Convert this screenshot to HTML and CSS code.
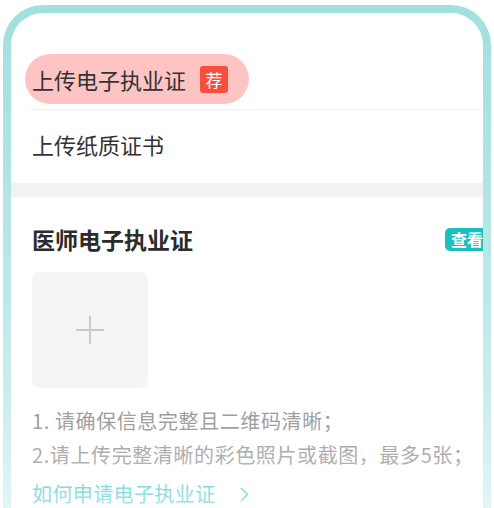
FILE: index.html
```html
<!DOCTYPE html>
<html lang="zh-CN">
<head>
    <meta charset="UTF-8">
    <meta name="viewport" content="width=device-width, initial-scale=1.0">
    <title>上传执业证</title>
    <link rel="stylesheet" href="styles.css">
</head>
<body>
    <div class="phone">
        <div class="screen">
            <!-- upload options -->
            <div class="options">
                <div class="option option-first">
                    <span class="pill">上传电子执业证<span class="tag-hot">荐</span></span>
                </div>
                <div class="divider"></div>
                <div class="option option-second">上传纸质证书</div>
            </div>

            <div class="band"></div>

            <!-- certificate card -->
            <div class="card">
                <div class="card-head">
                    <h2>医师电子执业证</h2>
                    <span class="tag-view">查看</span>
                </div>
                <div class="upload-box">
                    <svg width="30" height="30" viewBox="0 0 30 30">
                        <path d="M15 1v28M1 15h28" stroke="#c9c9c9" stroke-width="2" fill="none"/>
                    </svg>
                </div>
                <p class="tip">1. 请确保信息完整且二维码清晰；</p>
                <p class="tip">2.请上传完整清晰的彩色照片或截图，最多5张；</p>
                <a class="help" href="#">如何申请电子执业证
                    <svg class="chev" width="9" height="15" viewBox="0 0 9 15">
                        <path d="M1 1l6.5 6.5L1 14" stroke="currentColor" stroke-width="1.6" fill="none"/>
                    </svg>
                </a>
            </div>
            <div class="fade"></div>
        </div>
    </div>
</body>
</html>
```

FILE: styles.css
```css
body { margin: 0; background: #fff; font-family: "Noto Sans CJK SC", "Noto Sans", sans-serif; }
.phone { margin: 5px 0 0 3px; width: 472px; height: 495px; padding: 8px 8px 0 8px; border-radius: 40px 40px 0 0; background: linear-gradient(to bottom, #a2dfdf 0%, #b3e5e5 40%, #cdeeee 80%, #e2f5f5 100%); }
.screen { position: relative; width: 472px; height: 495px; background: #fff; border-radius: 32px 32px 0 0; overflow: hidden; }

.options { height: 170px; }
.option { padding-left: 21px; color: #333; font-size: 22px; }
.option-first { padding-top: 41px; height: 50px; }
.pill { display: inline-flex; align-items: center; height: 50px; margin-left: -7px; padding: 0 21px 0 7px; border-radius: 25px; background: #fec4c4; line-height: 30px; }
.tag-hot { display: inline-block; width: 28px; height: 27px; margin-left: 14px; border-radius: 3px; background: #f5503e; color: #fff; font-size: 17px; line-height: 27px; text-align: center; }
.divider { height: 1px; margin: 5px 0 0 20px; background: #efefef; }
.option-second { padding-top: 19px; line-height: 30px; }

.band { height: 14px; background: #f2f2f2; }

.card { padding-left: 21px; background: #fff; border-radius: 8px 8px 0 0; }
.card-head { display: flex; justify-content: space-between; align-items: center; margin-right: -6px; padding-top: 26px; height: 32px; }
.card-head h2 { margin: 0; font-size: 23px; font-weight: bold; color: #2b2b2b; line-height: 32px; }
.tag-view { padding: 0 6px; border-radius: 5px; background: #1cbfbf; color: #fff; font-size: 16px; font-weight: bold; line-height: 23px; }

.upload-box { display: flex; align-items: center; justify-content: center; width: 116px; height: 116px; margin-top: 17px; border-radius: 8px; background: #f5f5f5; }

.tip { margin: 0; font-size: 20px; line-height: 34px; letter-spacing: 0.6px; color: #9d9d9d; }
.tip:first-of-type { margin-top: 16px; }
.help { display: inline-flex; align-items: center; margin-top: 7px; font-size: 20px; line-height: 30px; letter-spacing: 0.4px; color: #3cc8ca; text-decoration: none; }
.chev { margin-left: 24px; }

.fade { position: absolute; left: 0; right: 0; bottom: 0; height: 90px; background: linear-gradient(to bottom, rgba(255,255,255,0) 0%, rgba(255,255,255,0.3) 70%, rgba(255,255,255,0.55) 100%); pointer-events: none; }
```
